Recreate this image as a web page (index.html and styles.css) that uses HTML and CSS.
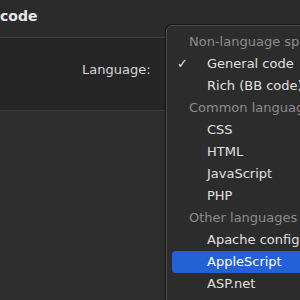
FILE: index.html
```html
<!DOCTYPE html>
<html>
<head>
  <title>Insert code</title>
  <link rel="stylesheet" href="styles.css">
</head>
<body>
  <div class="titlebar">
    <h1>code</h1>
  </div>
  <div class="options">
    <label>Language:</label>
  </div>
  <div class="content"></div>

  <div class="menu">
    <div class="menu-header">Non-language specific</div>
    <div class="menu-item checked"><span class="check">✓</span>General code</div>
    <div class="menu-item">Rich (BB code)</div>
    <div class="menu-header">Common languages</div>
    <div class="menu-item">CSS</div>
    <div class="menu-item">HTML</div>
    <div class="menu-item">JavaScript</div>
    <div class="menu-item">PHP</div>
    <div class="menu-header">Other languages</div>
    <div class="menu-item">Apache config</div>
    <div class="menu-item selected">AppleScript</div>
    <div class="menu-item">ASP.net</div>
  </div>
</body>
</html>
```

FILE: styles.css
```css
html, body {
  margin: 0;
  height: 100%;
  overflow: hidden;
}
body {
  font-family: "DejaVu Sans", sans-serif;
  font-size: 13px;
  background-color: #2c2c2c;
  color: #dcdcdc;
  position: relative;
}
.titlebar {
  height: 37px;
  background-color: #2b2b2b;
  border-bottom: 1px solid #3e3e3e;
  display: flex;
  align-items: center;
}
.titlebar h1 {
  margin: 0 0 6px 0;
  font-size: 14px;
  font-weight: bold;
  color: #e8e8e8;
}
.options {
  height: 72px;
  background-color: #252525;
  border-bottom: 1px solid #3b3b3b;
  display: flex;
  align-items: center;
  padding-left: 82px;
}
.options label {
  color: #d6d6d6;
  margin-top: -10px;
}
.content {
  height: 200px;
  background-color: #2d2d2d;
}
/* popup list of the language select, open over the dialog */
.menu {
  position: absolute;
  left: 166px;
  top: 25px;
  width: 170px;
  height: 300px;
  background-color: #2c2c2c;
  border: 1px solid #4b4b4b;
  border-radius: 6px;
  box-shadow: 0 0 0 1px #141414;
  padding-top: 5px;
}
.menu-header {
  height: 22px;
  line-height: 22px;
  padding-left: 22px;
  color: #8c8c8c;
  white-space: nowrap;
}
.menu-item {
  height: 22px;
  line-height: 22px;
  padding-left: 35px;
  margin-left: 5px;
  border-radius: 4px;
  position: relative;
  white-space: nowrap;
  color: #e0e0e0;
}
.check {
  position: absolute;
  left: 5px;
}
.selected {
  background-color: #2461d6;
  color: #ffffff;
}
```
